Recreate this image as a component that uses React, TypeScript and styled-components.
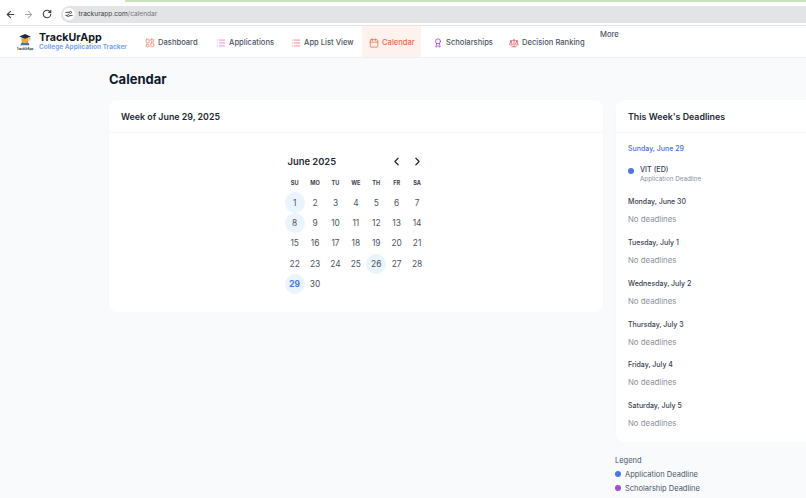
import React from 'react'
import styled, { createGlobalStyle } from 'styled-components'
import { ArrowLeft, ArrowRight, RotateCw, LayoutDashboard, List, Calendar as CalendarIcon, Award, Scale, ChevronLeft, ChevronRight } from 'lucide-react'

const GlobalStyle = createGlobalStyle`
  html, body { margin: 0; padding: 0; height: 100%; overflow: hidden; }
  body { background: #f8fafc; font-family: Inter, "Liberation Sans", sans-serif; color: #1f2937; }
`

const navItems = [
  { label: 'Dashboard', color: '#f0826a', icon: LayoutDashboard },
  { label: 'Applications', color: '#d96be8', icon: List },
  { label: 'App List View', color: '#ef6a6a', icon: List },
  { label: 'Calendar', color: '#ea6a45', icon: CalendarIcon, active: true },
  { label: 'Scholarships', color: '#a52fd8', icon: Award },
  { label: 'Decision Ranking', color: '#d94a5a', icon: Scale },
]

const weeks: number[][] = [
  [1, 2, 3, 4, 5, 6, 7],
  [8, 9, 10, 11, 12, 13, 14],
  [15, 16, 17, 18, 19, 20, 21],
  [22, 23, 24, 25, 26, 27, 28],
  [29, 30],
]
const marked = [1, 8, 26, 29]
const emptyDays = ['Monday, June 30', 'Tuesday, July 1', 'Wednesday, July 2', 'Thursday, July 3', 'Friday, July 4', 'Saturday, July 5']

const App: React.FC = () => {
  return (
    <>
      <GlobalStyle />
      <Chrome>
        <ChromeIcons>
          <ArrowLeft size={11} color="#3c4043" strokeWidth={2.4} />
          <ArrowRight size={11} color="#a4a6a8" strokeWidth={2.2} />
          <RotateCw size={10} color="#3c4043" strokeWidth={2.6} />
        </ChromeIcons>
        <UrlBar>
          <TuneBadge>
            <svg width="8" height="8" viewBox="0 0 10 10" fill="none" stroke="#444" strokeWidth="1.2">
              <path d="M0.5 3h4.5M0.5 7h2M6 7h3.5" />
              <circle cx="6.8" cy="3" r="1.3" />
              <circle cx="4.2" cy="7" r="1.3" />
            </svg>
          </TuneBadge>
          <UrlText>trackurapp.com<span>/calendar</span></UrlText>
        </UrlBar>
      </Chrome>
      <Nav>
        <Brand>
          <Logo>
            <svg width="18" height="15" viewBox="0 0 20 17">
              <path d="M5 14c0-3 2.200-4.500 5-4.500s5 1.500 5 4.500Z" fill="#3f6fb5" />
              <circle cx="10" cy="7.500" r="4.200" fill="#eeaa2e" />
              <path d="M3.500 4 10 1 16.500 4 10 6.600Z" fill="#1f2a44" />
              <path d="M15.500 4.500v4" stroke="#e0672f" strokeWidth="0.8" />
            </svg>
            <LogoCaption>TrackUrApp</LogoCaption>
          </Logo>
          <BrandText>
            <BrandName>TrackUrApp</BrandName>
            <BrandTag>College Application Tracker</BrandTag>
          </BrandText>
        </Brand>
        <NavList>
          {navItems.map(({ label, color, icon: Icon, active }) => (
            <NavItem key={label} $active={active}>
              <Icon size={10} color={color} strokeWidth={1.8} />
              <NavLabel $color={active ? color : undefined}>{label}</NavLabel>
            </NavItem>
          ))}
          <More>More</More>
        </NavList>
      </Nav>
      <Main>
        <PageTitle>Calendar</PageTitle>
        <Columns>
          <CalendarCard>
            <CardHeader>Week of June 29, 2025</CardHeader>
            <CalendarBody>
              <Month>
                <MonthHead>
                  <MonthName>June 2025</MonthName>
                  <MonthArrows>
                    <ChevronLeft size={13} color="#1f2937" strokeWidth={2.2} />
                    <ChevronRight size={13} color="#1f2937" strokeWidth={2.2} />
                  </MonthArrows>
                </MonthHead>
                <DayGrid>
                  {['SU', 'MO', 'TU', 'WE', 'TH', 'FR', 'SA'].map((d) => (
                    <DayHead key={d}>{d}</DayHead>
                  ))}
                  {weeks.flat().map((n) => (
                    <Day key={n} $marked={marked.includes(n)} $today={n === 29}>{n}</Day>
                  ))}
                </DayGrid>
              </Month>
            </CalendarBody>
          </CalendarCard>
          <Side>
            <DeadlineCard>
              <CardHeader>This Week's Deadlines</CardHeader>
              <DeadlineBody>
                <div>
                  <DateHeading $current>Sunday, June 29</DateHeading>
                  <Deadline>
                    <Dot $color="#4a78e8" $offset />
                    <div>
                      <DeadlineName>VIT (ED)</DeadlineName>
                      <DeadlineType>Application Deadline</DeadlineType>
                    </div>
                  </Deadline>
                </div>
                {emptyDays.map((d) => (
                  <div key={d}>
                    <DateHeading>{d}</DateHeading>
                    <NoDeadlines>No deadlines</NoDeadlines>
                  </div>
                ))}
              </DeadlineBody>
            </DeadlineCard>
            <Legend>
              <LegendTitle>Legend</LegendTitle>
              <LegendRow><Dot $color="#4a78e8" />Application Deadline</LegendRow>
              <LegendRow><Dot $color="#9a4fe0" />Scholarship Deadline</LegendRow>
            </Legend>
          </Side>
        </Columns>
      </Main>
    </>
  )
}

const Chrome = styled.div`
  height: 26px;
  box-sizing: border-box;
  padding: 3px 0 2px 4.5px;
  display: flex;
  align-items: center;
  gap: 9px;
  background: #fff;
  border-top: 2px solid #fff;
  border-bottom: 1px solid #e3e3e3;
  position: relative;
  &::before {
    content: '';
    position: absolute;
    top: -2px;
    left: 125px;
    right: 0;
    height: 2px;
    background: #c9e4b8;
  }
`
const ChromeIcons = styled.div`
  display: flex;
  align-items: center;
  gap: 7.5px;
`
const UrlBar = styled.div`
  flex: 1;
  height: 17px;
  padding-left: 2px;
  display: flex;
  align-items: center;
  gap: 4px;
  background: #e3e4e5;
  border-radius: 9px 0 0 9px;
`
const TuneBadge = styled.div`
  width: 12px;
  height: 12px;
  border-radius: 50%;
  background: #fff;
  display: flex;
  align-items: center;
  justify-content: center;
`
const UrlText = styled.div`
  font-size: 6.6px;
  color: #3c4043;
  span { color: #74777a; }
`
const Nav = styled.nav`
  height: 31px;
  display: flex;
  background: #fff;
  border-bottom: 1px solid #eef0f3;
  padding-left: 15px;
`
const Brand = styled.div`
  display: flex;
  align-items: center;
  gap: 4px;
  width: 123px;
`
const Logo = styled.div`
  width: 20px;
  display: flex;
  flex-direction: column;
  align-items: center;
`
const LogoCaption = styled.div`
  font-size: 2.8px;
  font-weight: 700;
  line-height: 3px;
  white-space: nowrap;
`
const BrandText = styled.div`
  display: flex;
  flex-direction: column;
`
const BrandName = styled.div`
  font-size: 10.7px;
  font-weight: 700;
  line-height: 11px;
  color: #111827;
`
const BrandTag = styled.div`
  font-size: 6.5px;
  font-weight: 700;
  line-height: 8px;
  color: #7ba4ee;
  white-space: nowrap;
`
const NavList = styled.div`
  display: grid;
  grid-template-columns: 66px 70px 73px 59px 71px 87px auto;
  gap: 5px;
  height: 100%;
`
const NavItem = styled.div<{ $active?: boolean }>`
  display: flex;
  align-items: center;
  gap: 3px;
  padding: 2px 0 0 7px;
  background: ${(p) => (p.$active ? '#fdf2ee' : 'transparent')};
`
const NavLabel = styled.span<{ $color?: string }>`
  font-size: 7.6px;
  font-weight: 500;
  color: ${(p) => p.$color ?? '#4b5563'};
  white-space: nowrap;
`
const More = styled.div`
  font-size: 7.6px;
  font-weight: 500;
  color: #4b5563;
  padding: 4px 0 0 6px;
`
const Main = styled.main`
  padding: 13px 0 0 109px;
`
const PageTitle = styled.h1`
  margin: 0 0 12px;
  font-size: 13px;
  line-height: 17px;
  font-weight: 700;
  color: #111827;
`
const Columns = styled.div`
  display: flex;
  align-items: flex-start;
  gap: 13px;
`
const Card = styled.section`
  background: #fff;
  border-radius: 8px;
  box-shadow: 0 0 2px rgba(15, 23, 42, 0.03);
`
const CalendarCard = styled(Card)`
  width: 494px;
  height: 212px;
  flex: none;
`
const CardHeader = styled.div`
  height: 33px;
  box-sizing: border-box;
  padding: 0 12px;
  display: flex;
  align-items: center;
  font-size: 8.85px;
  font-weight: 600;
  color: #1f2937;
  border-bottom: 1px solid #f5f6f8;
`
const CalendarBody = styled.div`
  display: flex;
  justify-content: center;
  padding-top: 19px;
`
const Month = styled.div`
  width: 143px;
`
const MonthHead = styled.div`
  display: flex;
  align-items: center;
  justify-content: space-between;
  height: 18px;
  padding: 0 4px 0 3px;
`
const MonthName = styled.div`
  font-size: 9.4px;
  font-weight: 600;
  color: #1f2937;
`
const MonthArrows = styled.div`
  display: flex;
  gap: 8px;
`
const DayGrid = styled.div`
  display: grid;
  grid-template-columns: repeat(7, 20.4px);
  grid-auto-rows: 20.4px;
  margin-top: 2px;
`
const DayHead = styled.div`
  padding-top: 2px;
  display: flex;
  align-items: center;
  justify-content: center;
  font-size: 5.6px;
  font-weight: 700;
  color: #374151;
`
const Day = styled.div<{ $marked?: boolean; $today?: boolean }>`
  width: 20.4px;
  height: 20.4px;
  border-radius: 50%;
  display: flex;
  align-items: center;
  justify-content: center;
  font-size: 8.4px;
  font-weight: ${(p) => (p.$today ? 700 : 400)};
  color: ${(p) => (p.$today ? '#4a78e8' : '#4b5563')};
  background: ${(p) => (p.$marked ? '#ebf3fd' : 'transparent')};
`
const Side = styled.div`
  width: 250px;
  flex: none;
`
const DeadlineCard = styled(Card)`
  height: 342px;
`
const DeadlineBody = styled.div`
  padding: 11px 12px;
  display: flex;
  flex-direction: column;
  gap: 13.9px;
`
const DateHeading = styled.div<{ $current?: boolean }>`
  font-size: 7px;
  font-weight: 500;
  line-height: 10px;
  color: ${(p) => (p.$current ? '#4a6fd8' : '#374151')};
`
const Deadline = styled.div`
  display: flex;
  align-items: flex-start;
  gap: 6px;
  margin-top: 11px;
`
const Dot = styled.span<{ $color: string; $offset?: boolean }>`
  width: 6px;
  height: 6px;
  border-radius: 50%;
  flex: none;
  margin-top: ${(p) => (p.$offset ? '3px' : '0')};
  background: ${(p) => p.$color};
`
const DeadlineName = styled.div`
  font-size: 7.2px;
  font-weight: 500;
  line-height: 10px;
  color: #374151;
`
const DeadlineType = styled.div`
  font-size: 6.3px;
  line-height: 8px;
  color: #8a919c;
`
const NoDeadlines = styled.div`
  font-size: 7.8px;
  line-height: 10px;
  color: #8a919c;
  margin-top: 7px;
`
const Legend = styled.div`
  margin: 14px 0 0 -1px;
`
const LegendTitle = styled.div`
  font-size: 7.5px;
  line-height: 10px;
  color: #4b5563;
  margin-bottom: 1px;
`
const LegendRow = styled.div`
  display: flex;
  align-items: center;
  gap: 4px;
  height: 14px;
  font-size: 7.5px;
  color: #4b5563;
`

export default App
